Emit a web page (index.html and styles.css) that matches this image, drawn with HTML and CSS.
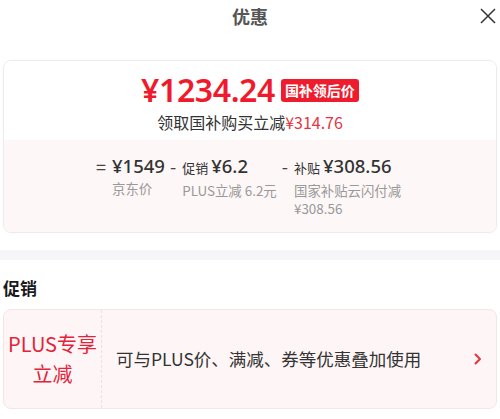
FILE: index.html
```html
<!DOCTYPE html>
<html lang="zh">
<head>
<meta charset="utf-8">
<link rel="stylesheet" href="styles.css">
</head>
<body>
<div class="sheet">
  <header class="head">
    <h1 class="title">优惠</h1>
    <button class="close" aria-label="关闭">
      <svg width="16" height="16" viewBox="0 0 16 16"><path d="M1 1L15 15M15 1L1 15" stroke="#333" stroke-width="1.5" fill="none"/></svg>
    </button>
  </header>

  <section class="price-card">
    <div class="price-top">
      <div class="price-line">
        <span class="price">¥1234.24</span>
        <span class="badge">国补领后价</span>
      </div>
      <div class="price-sub">领取国补购买立减<span class="red">¥314.76</span></div>
    </div>
    <div class="formula">
      <div class="term">
        <span class="op">=</span>
        <div class="term-body">
          <div class="amt">¥1549</div>
          <div class="lbl">京东价</div>
        </div>
      </div>
      <div class="term">
        <span class="op">-</span>
        <div class="term-body">
          <div class="amt"><span class="amt-tag">促销</span>¥6.2</div>
          <div class="lbl">PLUS立减 6.2元</div>
        </div>
      </div>
      <div class="term">
        <span class="op">-</span>
        <div class="term-body narrow">
          <div class="amt"><span class="amt-tag">补贴</span>¥308.56</div>
          <div class="lbl">国家补贴云闪付减¥308.56</div>
        </div>
      </div>
    </div>
  </section>

  <div class="divider"></div>

  <h2 class="sec-title">促销</h2>

  <div class="promo">
    <div class="promo-tag">PLUS专享<br>立减</div>
    <div class="promo-text">可与PLUS价、满减、券等优惠叠加使用</div>
    <svg class="chev" width="8" height="12" viewBox="0 0 8 12"><path d="M1.5 1.5L6 6L1.5 10.5" stroke="#e5343f" stroke-width="2" fill="none" stroke-linecap="round" stroke-linejoin="round"/></svg>
  </div>
</div>
</body>
</html>
```

FILE: styles.css
```css
* { box-sizing: border-box; }
html, body { margin: 0; padding: 0; background: #fff; }
body {
  font-family: "Noto Sans CJK SC", "Noto Sans", sans-serif;
  color: #333;
}
.sheet { width: 500px; }

.head {
  position: relative;
  height: 32px;
  display: flex;
  justify-content: center;
  align-items: center;
  margin-bottom: 28px;
}
.title {
  margin: 0;
  font-size: 18px;
  font-weight: 700;
  color: #555;
  line-height: 32px;
}
.close {
  position: absolute;
  right: 4px;
  top: 8px;
  width: 16px;
  height: 16px;
  padding: 0;
  border: 0;
  background: none;
  display: block;
}
.close svg { display: block; }

.price-card {
  margin: 0 3px;
  border: 1px solid #ececec;
  border-radius: 8px;
  overflow: hidden;
  box-shadow: 0 0 2px rgba(0,0,0,0.04);
}
.price-top {
  background: #fff;
  padding: 11px 0 7px;
  display: flex;
  flex-direction: column;
  align-items: center;
}
.price-line {
  display: flex;
  align-items: center;
  gap: 6px;
  height: 35px;
}
.price {
  font-family: "Noto Sans", "Noto Sans CJK SC", sans-serif;
  font-size: 32px;
  font-weight: 600;
  color: #ef1b2c;
  letter-spacing: -0.4px;
  line-height: 35px;
}
.badge {
  background: #ee1c2c;
  color: #fff;
  font-size: 14px;
  font-weight: 700;
  line-height: 23px;
  height: 23px;
  padding: 0 4px;
  border-radius: 3px;
  margin-top: 2px;
}
.price-sub {
  font-size: 16px;
  line-height: 22px;
  margin-top: 4px;
  color: #333;
}
.red { color: #e5343f; }

.formula {
  background: #fdf7f7;
  padding: 13px 0 15px;
  display: flex;
  justify-content: center;
  gap: 5px;
}
.term {
  display: flex;
  gap: 6px;
}
.op {
  font-size: 18px;
  line-height: 26px;
  color: #444;
}
.amt {
  font-family: "Noto Sans", "Noto Sans CJK SC", sans-serif;
  font-size: 18.5px;
  font-weight: 500;
  line-height: 26px;
  color: #333;
  white-space: nowrap;
}
.amt-tag {
  font-family: "Noto Sans CJK SC", sans-serif;
  font-size: 13px;
  font-weight: 400;
  margin-right: 3px;
}
.lbl {
  font-size: 13.4px;
  line-height: 18px;
  color: #999;
}
.narrow { width: 110px; }

.divider {
  height: 10px;
  background: #f6f6f9;
  margin-top: 17px;
}

.sec-title {
  margin: 16px 0 9px 3px;
  font-size: 17px;
  font-weight: 700;
  line-height: 24px;
  color: #1a1a1a;
}

.promo {
  margin: 0 3px;
  height: 100px;
  background: #fef6f6;
  border: 1px solid #f9e4e4;
  border-radius: 8px;
  display: flex;
  align-items: center;
}
.promo-tag {
  width: 98px;
  align-self: stretch;
  display: flex;
  align-items: center;
  justify-content: center;
  text-align: center;
  font-size: 20px;
  line-height: 30px;
  color: #e2233a;
  border-right: 1px dashed #f3dede;
}
.promo-text {
  flex: 1;
  padding-left: 14px;
  font-size: 17.5px;
  line-height: 24px;
  color: #333;
}
.chev {
  margin-right: 14px;
  display: block;
}
```
